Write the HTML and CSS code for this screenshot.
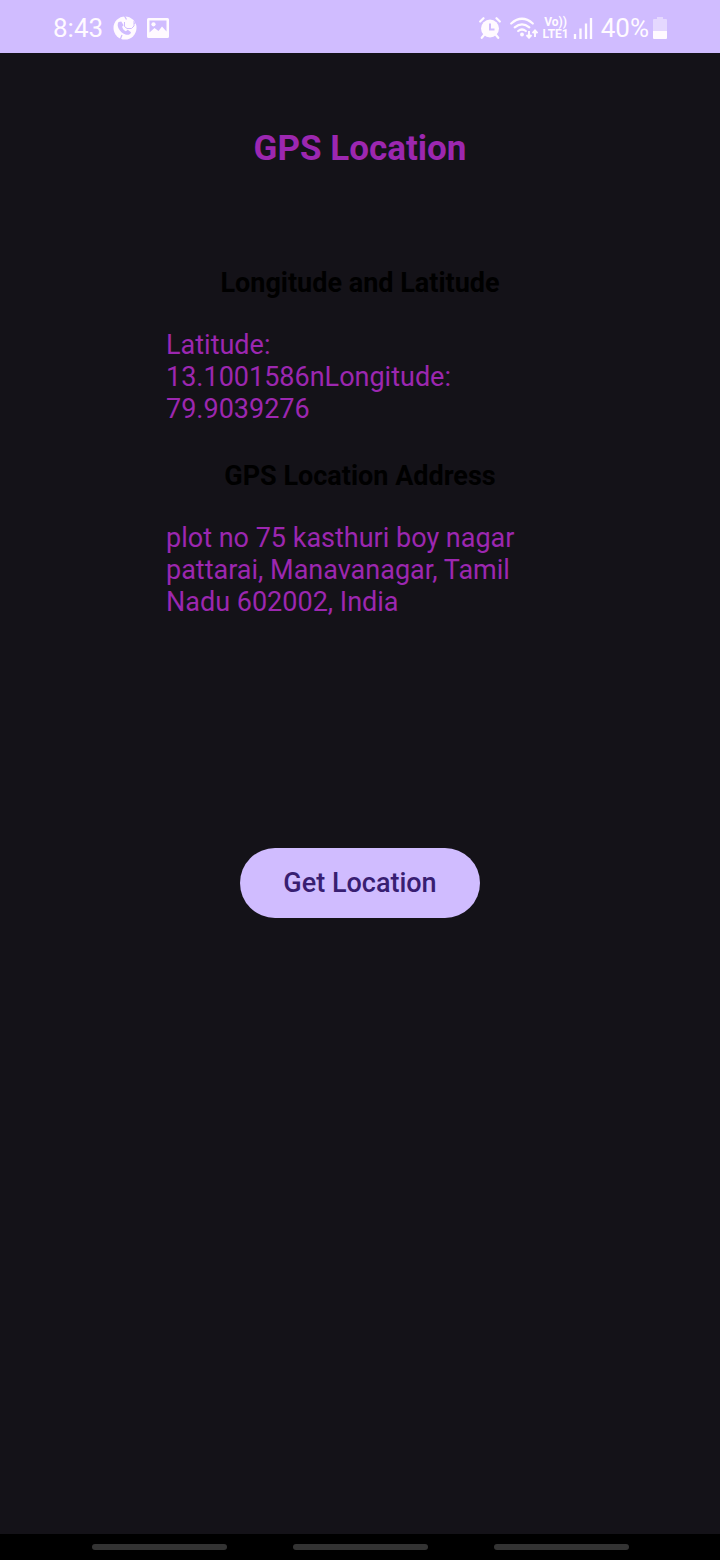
FILE: index.html
```html
<!DOCTYPE html>
<html lang="en">
<head>
<meta charset="utf-8">
<meta name="viewport" content="width=device-width, initial-scale=1">
<title>GPS Location</title>
<link rel="stylesheet" href="styles.css">
</head>
<body>
<div class="screen">
  <header class="status">
    <div class="status-left">
      <span class="status-text">8:43</span>
      <svg class="icon" width="24" height="24" viewBox="0 0 24 24" aria-hidden="true">
        <circle cx="12" cy="12" r="11.500" fill="#fffaff"/>
        <path d="M13.500 3.500 11.500 0M21 7.500l3-1.500M9 19l-2 5" stroke="#d0bcff" stroke-width="1.300"/>
        <path d="M5.500 6c-2.500 3.500 1 10.500 7 12.500 3 .8 5.500-.3 5.500-2.300l-3.200-2.400-2 1.500c-1.800-.8-3.300-2.800-3.700-4.600l1.500-1.500L8.300 5.500z" fill="#d0bcff"/>
        <path d="M11.500 6v4.500l2.500 2h4.500l2.500-2.500V5" fill="none" stroke="#d0bcff" stroke-width="1"/>
      </svg>
      <svg class="icon" width="22" height="20" viewBox="0 0 22 20" aria-hidden="true">
        <path fill="#fffaff" fill-rule="evenodd" d="M1.500 0h19Q22 0 22 1.500v17q0 1.500-1.500 1.500h-19Q0 20 0 18.500v-17Q0 0 1.500 0zM2.500 2.500v12l5-4.500 4 3 3.500-4.500 4.500 5v-11z"/>
        <circle cx="6.500" cy="6.300" r="2.100" fill="#fffaff"/>
      </svg>
    </div>
    <div class="status-right">
      <svg class="icon alarm" width="22" height="22" viewBox="0 0 22 22" aria-hidden="true">
        <circle cx="11" cy="11.500" r="9" fill="#fffaff"/>
        <path d="M1.200 4.500 4.500 1.200M20.800 4.500 17.500 1.200M5 18l-2.200 2.800M17 18l2.200 2.800" stroke="#fffaff" stroke-width="2.200" stroke-linecap="round"/>
        <path d="M11 6.500v6h4.500" fill="none" stroke="#d0bcff" stroke-width="2"/>
      </svg>
      <svg class="icon" width="28" height="22" viewBox="0 0 28 22" aria-hidden="true">
        <g fill="none" stroke="#fffaff" stroke-width="2.200" stroke-linecap="round">
          <path d="M1.200 6.500q10.800-9.500 21.600 0M4.700 10.300q7.300-6 14.600 0M8.200 14q3.800-3 7.600 0"/>
        </g>
        <circle cx="12" cy="17.500" r="1.900" fill="#fffaff"/>
        <path d="M19 14v6M16.500 18l2.500 2.700 2.500-2.700M25 20v-6M22.500 16.200l2.500-2.700 2.500 2.700" fill="none" stroke="#fffaff" stroke-width="1.900"/>
      </svg>
      <span class="network"><span>Vo))</span><span>LTE1</span></span>
      <svg class="icon" width="20" height="22" viewBox="0 0 20 22" aria-hidden="true">
        <path d="M2 22v-5M7.500 22V11.500M13 22V6.500M18 22V1" stroke="#fffaff" stroke-width="2.300"/>
      </svg>
      <span class="status-text percent">40%</span>
      <svg class="icon" width="14" height="22" viewBox="0 0 14 22" aria-hidden="true">
        <path d="M4 0h6v2h3q1 0 1 1v11H0V3q0-1 1-1h3z" fill="#e5d8ff"/>
        <path d="M0 14h14v7q0 1-1 1H1q-1 0-1-1z" fill="#fffaff"/>
      </svg>
    </div>
  </header>
  <main class="content">
    <h1 class="title">GPS Location</h1>
    <section class="details">
      <h2 class="label">Longitude and Latitude</h2>
      <p class="value">Latitude: 13.1001586nLongitude: 79.9039276</p>
      <h2 class="label">GPS Location Address</h2>
      <p class="value">plot no 75 kasthuri boy nagar pattarai, Manavanagar, Tamil Nadu 602002, India</p>
    </section>
    <button class="action" type="button">Get Location</button>
  </main>
  <footer class="navbar">
    <span class="pill"></span><span class="pill"></span><span class="pill"></span>
  </footer>
</div>
</body>
</html>
```
FILE: styles.css
```css
* { box-sizing: border-box; }
body {
  margin: 0;
  background: #141218;
  color: #9c27b0;
  font-family: Roboto, "Liberation Sans", sans-serif;
}
.screen {
  min-height: 100vh;
  display: flex;
  flex-direction: column;
}
.status {
  display: flex;
  justify-content: space-between;
  align-items: center;
  padding: 11px 53px 8px;
  background: #d0bcff;
  color: #fffaff;
}
.status-left, .status-right {
  display: flex;
  align-items: center;
}
.status-left { gap: 10px; }
.status-right { gap: 4px; }
.icon { display: block; flex: none; }
.alarm { margin-right: 5px; }
.status-text {
  font-size: 26px;
  line-height: 34px;
}
.percent { margin-left: 4px; }
.network {
  display: flex;
  flex-direction: column;
  align-items: center;
  font-size: 12px;
  font-weight: 700;
  line-height: 12px;
}
.content {
  flex: 1;
  display: flex;
  flex-direction: column;
  align-items: center;
  padding: 75px 24px 24px;
}
.title {
  margin: 0;
  font-size: 35px;
  line-height: 42px;
  font-weight: 700;
}
.details {
  width: 100%;
  max-width: 388px;
  margin-top: 97px;
}
.label {
  margin: 0;
  color: #000;
  font-size: 27px;
  line-height: 32px;
  font-weight: 700;
  text-align: center;
}
.value {
  max-width: 360px;
  margin: 30px 0 35px;
  font-size: 27px;
  line-height: 32px;
}
.value:last-child { margin-bottom: 0; }
.action {
  min-width: 240px;
  margin-top: 230px;
  padding: 19px 40px;
  border: 0;
  border-radius: 35px;
  background: #d0bcff;
  color: #381e72;
  font: 500 27px/32px Roboto, "Liberation Sans", sans-serif;
}
.navbar {
  display: flex;
  justify-content: center;
  gap: 66px;
  padding: 10px 24px;
  background: #000;
}
.pill {
  width: 135px;
  height: 6px;
  border-radius: 3px;
  background: #333;
}
```
